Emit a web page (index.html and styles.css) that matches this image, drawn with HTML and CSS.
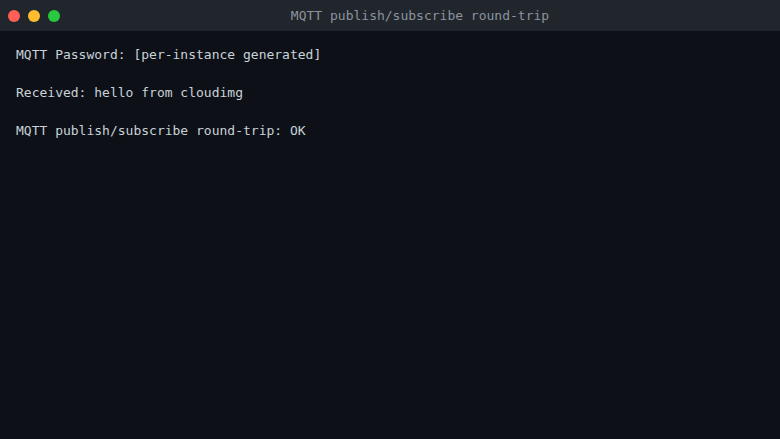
FILE: index.html
```html
<!DOCTYPE html>
<html>
<head>
<meta charset="utf-8">
<link rel="stylesheet" href="styles.css">
</head>
<body>
<div class="window">
  <div class="titlebar">
    <div class="dots">
      <span class="dot red"></span>
      <span class="dot yellow"></span>
      <span class="dot green"></span>
    </div>
    <div class="title">MQTT publish/subscribe round-trip</div>
  </div>
  <pre class="terminal">MQTT Password: [per-instance generated]

Received: hello from cloudimg

MQTT publish/subscribe round-trip: OK</pre>
</div>
</body>
</html>
```
FILE: styles.css
```css
html, body {
  margin: 0;
  padding: 0;
  width: 780px;
  height: 439px;
  overflow: hidden;
  background: #0d1117;
}
.window {
  display: flex;
  flex-direction: column;
  width: 780px;
  height: 439px;
  font-family: "DejaVu Sans Mono", monospace;
  font-size: 13px;
}
.titlebar {
  display: flex;
  align-items: center;
  height: 31px;
  background: #21262d;
  padding-left: 8px;
  box-sizing: border-box;
}
.dots {
  display: flex;
  gap: 8px;
  width: 52px;
}
.dot {
  width: 12px;
  height: 12px;
  border-radius: 50%;
}
.red { background: #ff5f57; }
.yellow { background: #febc2e; }
.green { background: #28c840; }
.title {
  flex: 1;
  text-align: center;
  color: #8b949e;
  line-height: 19px;
}
.terminal {
  margin: 0;
  padding: 14px 16px;
  font-family: "DejaVu Sans Mono", monospace;
  font-size: 13px;
  line-height: 19px;
  color: #c9d1d9;
  white-space: pre;
}
```
